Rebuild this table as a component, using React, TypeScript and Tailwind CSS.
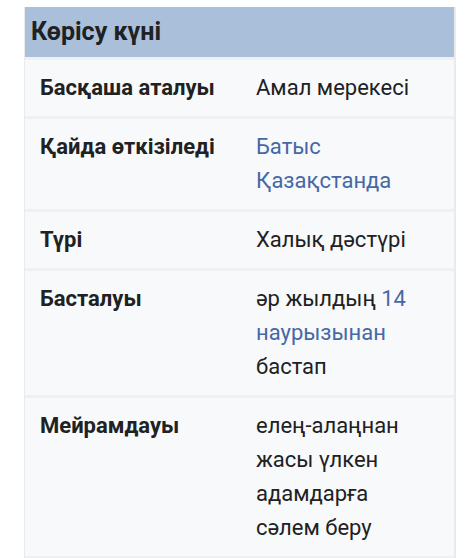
const ROWS: { label: string; value: React.ReactNode }[] = [
  { label: 'Басқаша аталуы', value: 'Амал мерекесі' },
  {
    label: 'Қайда өткізіледі',
    value: <a className="text-[#4668a6]">Батыс Қазақстанда</a>,
  },
  { label: 'Түрі', value: 'Халық дәстүрі' },
  {
    label: 'Басталуы',
    value: (
      <>
        әр жылдың <a className="text-[#4668a6]">14 наурызынан</a> бастап
      </>
    ),
  },
  { label: 'Мейрамдауы', value: 'елең-алаңнан жасы үлкен адамдарға сәлем беру' },
]

export default function App() {
  return (
    <div className="h-[558px] w-[465px] overflow-hidden bg-white pt-[7px] pl-[24px] font-['Roboto',sans-serif] text-[#202122]">
      <div className="w-[432px] border-r-2 border-l border-[#e8ebee]">
        <div className="flex h-[50px] items-center bg-[#a9bfda] pl-[6px] text-[25px] font-bold">
          Көрісу күні
        </div>
        {ROWS.map(row => (
          <div
            key={row.label}
            className="grid grid-cols-[231px_1fr] border-t-[3px] border-[#eef0f2] bg-[#f8f9fa] py-[11px] text-[22px] leading-[34px] first:border-t-0 first:pt-[12px]"
          >
            <div className="pl-[15px] font-bold">{row.label}</div>
            <div className="pr-[28px]">{row.value}</div>
          </div>
        ))}
        <div className="h-[3px] bg-[#eef0f2]" />
      </div>
    </div>
  )
}
